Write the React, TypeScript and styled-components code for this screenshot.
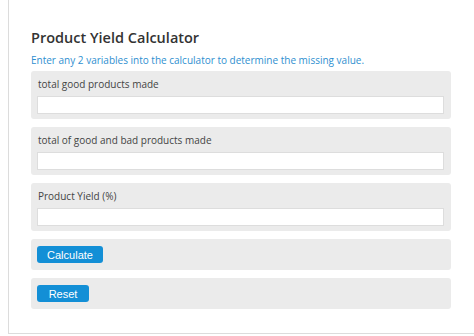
import React from 'react'
import styled, { createGlobalStyle } from 'styled-components'

const GlobalStyle = createGlobalStyle`
  html, body {
    margin: 0;
    padding: 0;
    background: #ffffff;
  }
`

const Page = styled.div`
  margin-left: 8px;
  height: 334px;
  box-sizing: border-box;
  border-left: 1px solid #dcdcdc;
  border-bottom: 1px solid #dcdcdc;
  padding: 28px 23px 0 22px;
  font-family: "Open Sans", "DejaVu Sans", sans-serif;
`

const Title = styled.h1`
  margin: 0;
  font-size: 14.5px;
  font-weight: 600;
  color: #333333;
  line-height: 20px;
`

const Intro = styled.p`
  margin: 5px 0 4px;
  font-size: 10px;
  line-height: 14px;
  color: #2f8fd0;
`

const Panels = styled.div`
  display: flex;
  flex-direction: column;
  gap: 8px;
`

const Panel = styled.div<{ $h: number }>`
  height: ${props => props.$h}px;
  box-sizing: border-box;
  background: #ebebeb;
  border-radius: 3px;
  padding: ${props => props.$h > 40 ? '6px 7px 0 6px' : '7px 6px 0'};
  display: flex;
  flex-direction: column;
  align-items: flex-start;
`

const Label = styled.label`
  font-size: 10px;
  line-height: 14px;
  height: 14px;
  color: #444444;
  margin: 0 0 5px 1px;
`

const Input = styled.input`
  width: 100%;
  height: 18px;
  box-sizing: border-box;
  border: 1px solid #dddddd;
  background: #ffffff;
  padding: 0 4px;
  margin: 0;
  outline: none;
`

const Button = styled.button<{ $w: number }>`
  width: ${props => props.$w}px;
  height: 17px;
  border: none;
  border-radius: 3px;
  background: #138fd6;
  color: #ffffff;
  font-family: "Liberation Sans", Arial, sans-serif;
  font-size: 11px;
  padding: 0;
  text-align: center;
`

const fields = [
  'total good products made',
  'total of good and bad products made',
  'Product Yield (%)',
]

export default function App() {
  return (
    <>
      <GlobalStyle />
      <Page>
        <Title>Product Yield Calculator</Title>
        <Intro>Enter any 2 variables into the calculator to determine the missing value.</Intro>
        <Panels>
          {fields.map(f => (
            <Panel $h={48} key={f}>
              <Label>{f}</Label>
              <Input type="text" />
            </Panel>
          ))}
          <Panel $h={31}>
            <Button $w={66}>Calculate</Button>
          </Panel>
          <Panel $h={31}>
            <Button $w={52}>Reset</Button>
          </Panel>
        </Panels>
      </Page>
    </>
  )
}
